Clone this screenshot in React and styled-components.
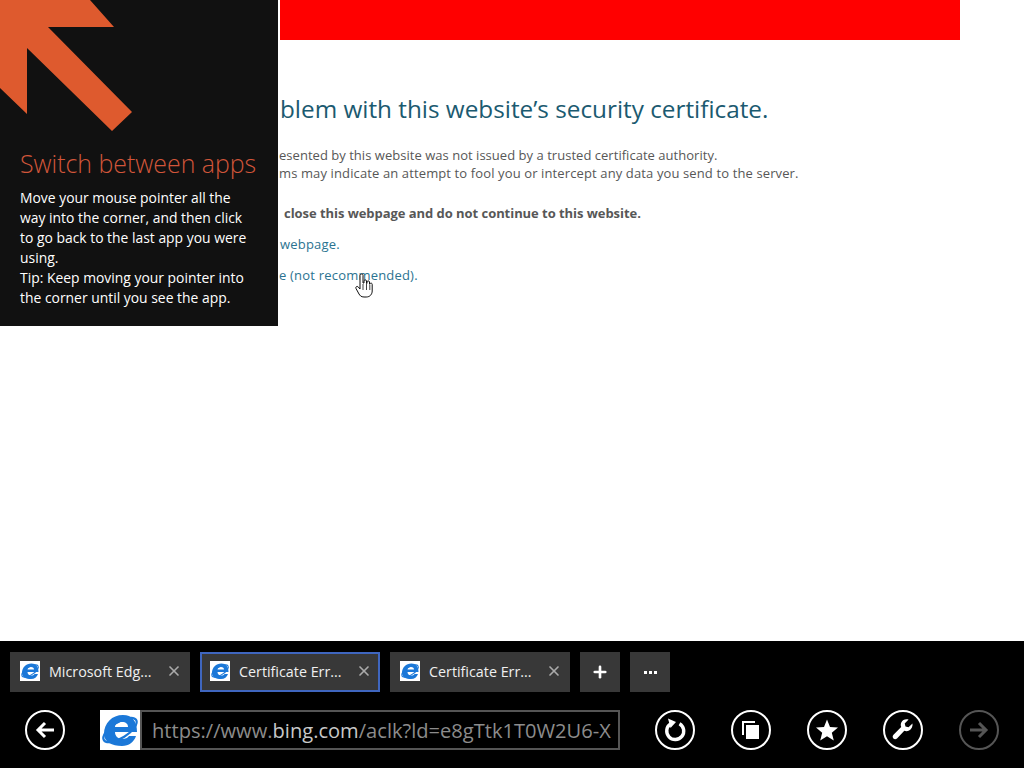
import React from "react";
import styled, { createGlobalStyle } from "styled-components";
import { X, Plus } from "lucide-react";

const Global = createGlobalStyle`
  html, body { margin: 0; padding: 0; background: #000; }
  body { font-family: "Open Sans", "Liberation Sans", sans-serif; }
`;

const Screen = styled.div`
  position: relative;
  width: 1024px;
  height: 768px;
  overflow: hidden;
  display: flex;
  flex-direction: column;
`;

const Page = styled.main`
  position: relative;
  height: 641px;
  background: #fff;
  flex: none;
`;

const RedBar = styled.div`
  width: 680px;
  height: 40px;
  margin-left: 280px;
  background: #ff0000;
`;

const Article = styled.div`
  padding: 51px 0 0 279px;
  color: #575757;
  font-size: 13px;
  line-height: 18px;
  white-space: nowrap;
`;

const Title = styled.h1`
  margin: 0 0 19px 1px;
  font-size: 24.3px;
  line-height: 36px;
  font-weight: 400;
  color: #1b5a70;
`;

const Para = styled.p`
  margin: 0 0 ${(p) => p.$after || 0}px ${(p) => p.$indent || 0}px;
  font-weight: ${(p) => (p.$bold ? 700 : 400)};
  letter-spacing: ${(p) => p.$spacing || 0}px;
`;

const LinkLine = styled.a`
  display: block;
  margin-left: ${(p) => p.$indent || 0}px;
  margin-bottom: 13px;
  letter-spacing: 0.2px;
  color: #2b7391;
`;

const Coach = styled.aside`
  position: absolute;
  left: 0;
  top: 0;
  width: 278px;
  height: 326px;
  background: #111111;
  color: #fff;
`;

const CoachArrow = styled.svg`
  display: block;
  width: 132px;
  height: 131px;
`;

const CoachBody = styled.div`
  padding: 16px 0 0 20px;
`;

const CoachTitle = styled.h2`
  margin: 0 0 9px;
  font-size: 24.9px;
  line-height: 32px;
  font-weight: 300;
  color: #d2563a;
  white-space: nowrap;
`;

const CoachText = styled.p`
  margin: 0;
  font-size: 13.9px;
  line-height: 20px;
  white-space: nowrap;
`;

const Cursor = styled.svg`
  position: absolute;
  left: 355px;
  top: 273px;
  width: 18px;
  height: 25px;
`;

const Bar = styled.footer`
  flex: 1;
  background: #000;
`;

const TabRow = styled.div`
  display: flex;
  gap: 10px;
  padding: 11px 0 0 10px;
`;

const Tab = styled.div`
  box-sizing: border-box;
  width: 180px;
  height: 40px;
  display: flex;
  align-items: center;
  gap: 9px;
  padding: 0 ${(p) => (p.$active ? 6 : 8)}px 2px ${(p) => (p.$active ? 8 : 10)}px;
  background: #383838;
  border: ${(p) => (p.$active ? "2px solid #3f66bf" : "none")};
  color: #f0f0f0;
  font-size: 14.3px;
`;

const TabLabel = styled.span`
  flex: 1;
  white-space: nowrap;
`;

const SquareBtn = styled.div`
  width: 40px;
  height: 40px;
  background: #383838;
  color: #fff;
  display: flex;
  align-items: center;
  justify-content: center;
  gap: 2px;
`;

const Dot = styled.i`
  width: 3px;
  height: 3px;
  background: #fff;
`;

const NavRow = styled.div`
  display: flex;
  align-items: center;
  padding: 18px 0 0 25px;
`;

const Round = styled.div`
  box-sizing: border-box;
  width: 40px;
  height: 40px;
  flex: none;
  margin-left: ${(p) => p.$gap || 0}px;
  border: 2.5px solid ${(p) => (p.$dim ? "#555" : "#fff")};
  border-radius: 50%;
  display: flex;
  align-items: center;
  justify-content: center;
  color: ${(p) => (p.$dim ? "#555" : "#fff")};
`;

const Favicon = styled.div`
  width: ${(p) => p.$size}px;
  height: ${(p) => p.$size}px;
  flex: none;
  background: #fff;
  line-height: 0;
  margin-left: ${(p) => p.$left || 0}px;
`;

const Address = styled.div`
  box-sizing: border-box;
  width: 480px;
  height: 40px;
  flex: none;
  border: 2px solid #555;
  padding: 0 0 0 10px;
  font-size: 20.1px;
  line-height: 37px;
  color: #8c8c8c;
  white-space: nowrap;
  overflow: hidden;
`;

const Host = styled.span`
  color: #c8c8c8;
`;

const IeLogo = () => (
  <svg viewBox="0 0 40 40" width="100%" height="100%">
    <ellipse cx="20" cy="20" rx="19" ry="8" fill="none" stroke="#1b78d8" strokeWidth="2.2" transform="rotate(-32 20 20)" />
    <path
      d="M4 24C4 13 12 5 23 5c9 0 14 6 14 17H15c0 4 3 7 7 7 3 0 6-1 7-3h7c-2 6-7 10-14 10C12 36 4 32 4 24zM15 17h13c0-3-2-5-6-5-4 0-7 2-7 5z"
      fill="#1b78d8"
      fillRule="evenodd"
    />
  </svg>
);

const tabs = [
  { label: "Microsoft Edg..." },
  { label: "Certificate Err...", active: true },
  { label: "Certificate Err..." },
];

const App = () => (
  <Screen>
    <Global />
    <Page>
      <RedBar />
      <Article>
        <Title>blem with this website’s security certificate.</Title>
        <Para $spacing={0.03}>esented by this website was not issued by a trusted certificate authority.</Para>
        <Para $after={22} $spacing={0.12}>ms may indicate an attempt to fool you or intercept any data you send to the server.</Para>
        <Para $bold $after={13} $indent={5} $spacing={-0.05}>close this webpage and do not continue to this website.</Para>
        <LinkLine $indent={1}>webpage.</LinkLine>
        <LinkLine>e (not recommended).</LinkLine>
      </Article>
      <Coach>
        <CoachArrow viewBox="0 0 132 131">
          <polygon points="0,0 90,0 114,27 48,27 132,112 112,131 27,48 27,114 0,88" fill="#de5a2e" />
        </CoachArrow>
        <CoachBody>
          <CoachTitle>Switch between apps</CoachTitle>
          <CoachText>
            Move your mouse pointer all the
            <br />
            way into the corner, and then click
            <br />
            to go back to the last app you were
            <br />
            using.
            <br />
            Tip: Keep moving your pointer into
            <br />
            the corner until you see the app.
          </CoachText>
        </CoachBody>
      </Coach>
      <Cursor viewBox="0 0 18 25">
        <path
          d="M5 2.500c0-2 3-2 3 0V10l1 0V8c0-1.500 2.500-1.500 2.500 0v2.500l.5 0V9c0-1.500 2.500-1.500 2.500 0v2l.5 0c0-1.200 2.200-1.200 2.200.3V18c0 3-2 6-6 6H9c-3 0-4-1.500-5-3L1 15.500c-.8-1.500 1-2.800 2.200-1.600L5 16z"
          fill="#fff"
          stroke="#111"
          strokeWidth="1"
        />
        <path d="M8 11v6M11.500 11v6M14.800 11.500v5.500" stroke="#111" strokeWidth=".8" fill="none" />
      </Cursor>
    </Page>
    <Bar>
      <TabRow>
        {tabs.map((t, i) => (
          <Tab key={i} $active={t.active}>
            <Favicon $size={20}>
              <IeLogo />
            </Favicon>
            <TabLabel>{t.label}</TabLabel>
            <X size={16} strokeWidth={2.5} color="#aaa" />
          </Tab>
        ))}
        <SquareBtn>
          <Plus size={18} strokeWidth={3.5} />
        </SquareBtn>
        <SquareBtn>
          <Dot />
          <Dot />
          <Dot />
        </SquareBtn>
      </TabRow>
      <NavRow>
        <Round>
          <svg width="24" height="24" viewBox="0 0 24 24" fill="none" stroke="currentColor" strokeWidth="3">
            <path d="M21 12H5M12 5l-7 7 7 7" />
          </svg>
        </Round>
        <Favicon $size={40} $left={35}>
          <IeLogo />
        </Favicon>
        <Address>
          https://www.<Host>bing.com</Host>/aclk?ld=e8gTtk1T0W2U6-X
        </Address>
        <Round $gap={35}>
          <svg width="26" height="26" viewBox="0 0 26 26" fill="none" stroke="currentColor" strokeWidth="3.4">
            <path d="M8.500 7a8.500 8.500 0 1 0 9 -.3" />
            <path d="M6 1.500l8 3.500-5.500 6z" fill="currentColor" stroke="none" />
          </svg>
        </Round>
        <Round $gap={36}>
          <svg width="20" height="20" viewBox="0 0 20 20" fill="currentColor">
            <path d="M1 1h13v2H3v12H1z" />
            <rect x="5" y="5" width="13" height="14" />
          </svg>
        </Round>
        <Round $gap={36}>
          <svg width="24" height="24" viewBox="0 0 24 24" fill="currentColor">
            <path d="M12 1.500l3 7.600 8 .5-6.200 5.100 2 7.800L12 18.200 5.200 22.500l2-7.800L1 9.600l8-.5z" />
          </svg>
        </Round>
        <Round $gap={36}>
          <svg width="24" height="24" viewBox="0 0 24 24" fill="currentColor">
            <path d="M21.500 5.500l-4 3.800-3-.8-.8-3 3.900-3.900c-3-.9-6 .2-7.200 2.700-.8 1.500-.8 3.300-.2 4.700L2.500 16.800c-1.200 1.200-1 2.700-.1 3.700s2.500 1.100 3.600 0l7.300-7.700c1.500.6 3.300.5 4.800-.3 2.700-1.400 3.700-4.300 3.400-7z" />
          </svg>
        </Round>
        <Round $gap={36} $dim>
          <svg width="24" height="24" viewBox="0 0 24 24" fill="none" stroke="currentColor" strokeWidth="3">
            <path d="M3 12h16M12 5l7 7-7 7" />
          </svg>
        </Round>
      </NavRow>
    </Bar>
  </Screen>
);

export default App;
